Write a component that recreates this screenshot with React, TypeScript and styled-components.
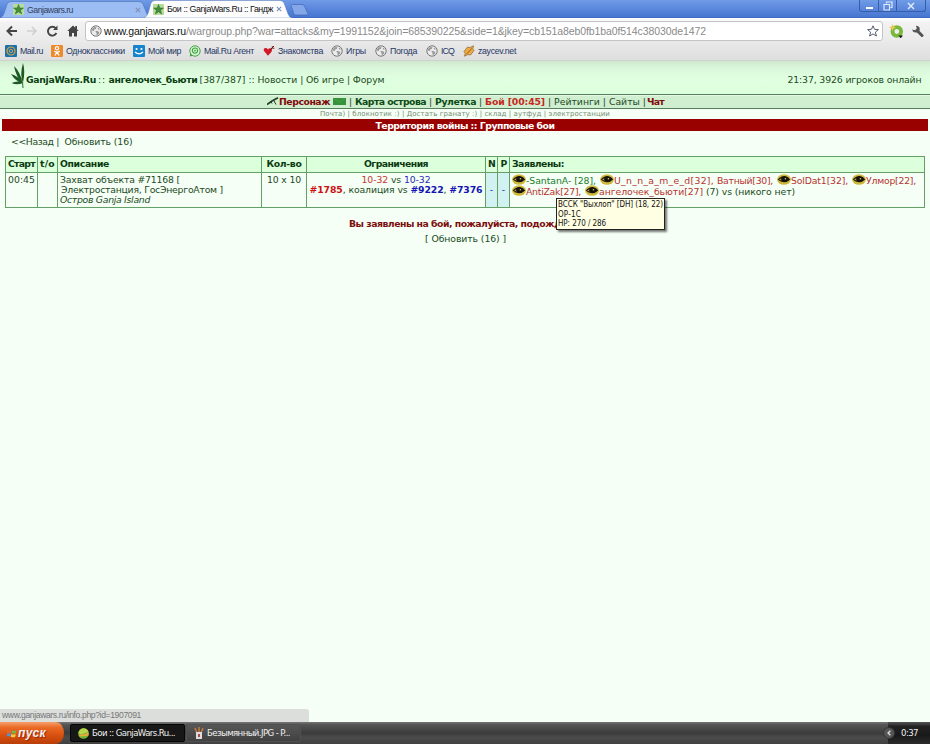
import React, { ReactNode, useLayoutEffect, useRef, useState } from 'react';
import styled, { createGlobalStyle, css } from 'styled-components';

const Global = createGlobalStyle`
  * { box-sizing: border-box; }
  body { margin: 0; background: #f5fff5; overflow: hidden; }
`;

const SANS = '"Liberation Sans", Arial, sans-serif';
const VERDANA = '"DejaVu Sans", Verdana, sans-serif';
const TAHOMA = '"DejaVu Sans Condensed", "DejaVu Sans", Tahoma, sans-serif';

/* ---------- text whose tracking adapts to a given width ---------- */

const Label = styled.span<{ $w: number; $ml?: number; $bold?: boolean; $color?: string; $italic?: boolean }>`
  display: block;
  flex: none;
  width: ${(p) => p.$w}px;
  margin-left: ${(p) => p.$ml ?? 0}px;
  white-space: nowrap;
  ${(p) => p.$bold && css`font-weight: bold;`}
  ${(p) => p.$italic && css`font-style: italic;`}
  ${(p) => p.$color && css`color: ${p.$color};`}
`;

type FitProps = { w: number; ml?: number; bold?: boolean; italic?: boolean; color?: string; children: ReactNode };

function Fit({ w, ml, bold, italic, color, children }: FitProps) {
  const inner = useRef<HTMLSpanElement>(null);
  const [spacing, setSpacing] = useState(0);
  useLayoutEffect(() => {
    const el = inner.current;
    if (!el) return;
    const count = (el.textContent ?? '').length || 1;
    setSpacing((w - el.getBoundingClientRect().width) / count);
  }, [w]);
  return (
    <Label $w={w} $ml={ml} $bold={bold} $italic={italic} $color={color}>
      <span ref={inner} style={{ letterSpacing: spacing }}>{children}</span>
    </Label>
  );
}

/* ---------- browser window ---------- */

const Window = styled.div`
  display: flex;
  flex-direction: column;
  width: 930px;
  height: 744px;
  overflow: hidden;
  font-family: ${VERDANA};
  font-size: 9.3px;
  color: #1c4a24;
`;

const TitleBar = styled.div`
  display: flex;
  align-items: flex-end;
  flex: none;
  height: 18px;
  background: linear-gradient(#6f9be6, #5a87dc 50%, #4877d1 92%, #3d66b8);
  font-family: ${SANS};
  font-size: 8.8px;
`;

const Tab = styled.div<{ $active?: boolean }>`
  position: relative;
  display: flex;
  align-items: center;
  width: 143px;
  height: ${(p) => (p.$active ? 18 : 17)}px;
  margin-left: ${(p) => (p.$active ? 1 : 4)}px;
  padding-left: ${(p) => (p.$active ? 5 : 9)}px;
  color: ${(p) => (p.$active ? '#111' : '#33425f')};
  z-index: ${(p) => (p.$active ? 1 : 0)};
`;

const TabShape = styled.svg`
  position: absolute;
  left: -4px;
  top: 0;
  z-index: -1;
`;

const Close = styled.svg<{ $ml: number }>`
  flex: none;
  margin-left: ${(p) => p.$ml}px;
`;

const NewTab = styled.svg`
  flex: none;
  margin: 0 auto 0 -1px;
`;

const WindowButtons = styled.div`
  display: flex;
  align-self: flex-start;
  width: 67px;
  height: 12px;
  margin-right: 4px;
  border: 1px solid #365da8;
  border-top: 0;
  border-radius: 0 0 3px 3px;
`;

const WindowButton = styled.div<{ $w: number }>`
  display: flex;
  align-items: center;
  justify-content: center;
  width: ${(p) => p.$w}px;
  & + & { border-left: 1px solid #365da8; }
`;

const Toolbar = styled.div`
  display: flex;
  align-items: center;
  flex: none;
  height: 24px;
  padding: 2px 0 0 6px;
  background: linear-gradient(#ffffff, #f2f2f2 20%, #eaeaea);
  > svg { flex: none; }
`;

const Nav = styled.div`
  display: flex;
  align-items: center;
  flex: none;
  width: 79px;
  gap: 8px;
`;

const AddressBar = styled.div`
  display: flex;
  align-items: center;
  flex: none;
  width: 798px;
  height: 20px;
  margin-right: 6px;
  padding-left: 4px;
  background: #fff;
  border: 1px solid #c4c4c4;
  border-radius: 3px;
  font: 10.5px ${SANS};
`;

const Star = styled.svg`
  margin-left: 161px;
`;

const Wrench = styled.svg`
  margin-left: 7px;
`;

const Bookmarks = styled.div`
  display: flex;
  align-items: center;
  flex: none;
  height: 19px;
  padding-left: 5px;
  background: linear-gradient(#e9e9e9, #dedede);
  border-bottom: 1px solid #cfd3cf;
  font: 8.8px ${SANS};
  color: #1f3764;
  svg { flex: none; }
`;

const Bookmark = styled.div<{ $ml?: number }>`
  display: flex;
  align-items: center;
  gap: 3px;
  margin-left: ${(p) => p.$ml ?? 0}px;
`;

/* ---------- page ---------- */

const Page = styled.main`
  flex: 1;
  display: flex;
  flex-direction: column;
  background: #f5fff5;
`;

const SiteHeader = styled.header`
  display: flex;
  align-items: center;
  height: 34px;
  padding: 4px 0 0 10px;
  background: linear-gradient(#cfe9cf, #dcf8dc 25%, #e0ffe0 60%, #dcffdc);
  border-bottom: 1px solid #55805a;
`;

const Leaf = styled.svg`
  flex: none;
  margin-top: -7px;
`;

const MainMenu = styled.nav`
  display: flex;
  align-items: center;
  height: 14px;
  padding: 0 0 2px 267px;
  background: #d0eed0;
  border-bottom: 1px solid #55805a;
  border-top: 1px solid #e4f8e4;
`;

const SubMenu = styled.nav`
  display: flex;
  align-items: center;
  height: 10px;
  padding: 0 0 1px 320px;
  font-size: 7px;
  color: #748a74;
`;

const Banner = styled.h1`
  display: flex;
  align-items: center;
  justify-content: center;
  height: 12px;
  margin: 0 2px;
  background: #990000;
  color: #fff;
  font-size: 9.3px;
`;

const BackRow = styled.div`
  display: flex;
  align-items: center;
  height: 21px;
  padding-left: 11px;
`;

const Battles = styled.section`
  display: grid;
  grid-template-columns: 32px 20px 204px 45px 179px 12px 12px 415px;
  grid-template-rows: 16px 35px;
  width: 920px;
  margin: 4px 0 0 5px;
  border: solid #62a065;
  border-width: 1px 1px 0 0;
`;

const Cell = styled.div<{ $head?: boolean; $center?: boolean; $tint?: boolean; $middle?: boolean }>`
  display: flex;
  flex-direction: column;
  min-width: 0;
  align-items: ${(p) => (p.$center ? 'center' : 'flex-start')};
  justify-content: ${(p) => (p.$head || p.$middle ? 'center' : 'flex-start')};
  padding: ${(p) => (p.$head || p.$middle ? '0' : '2px 0 0')} ${(p) => (p.$center ? 0 : 2)}px;
  line-height: 10px;
  border: solid #62a065;
  border-width: 0 0 1px 1px;
  ${(p) => p.$head && css`background: #dcffdc; font-weight: bold; color: #0c3a10; padding-bottom: 1px;`}
  ${(p) => p.$tint && css`background: #d2f1f1; color: #2626a5;`}
`;

const Players = styled.div`
  display: flex;
  align-items: center;
  height: 11px;
  gap: 4px;
`;

const Player = styled.div`
  display: flex;
  align-items: center;
  flex: none;
  color: #b73332;
`;

const Eye = styled.svg`
  flex: none;
  margin-top: -3px;
`;

const Notice = styled.div`
  position: relative;
  display: flex;
  height: 12px;
  margin-top: 10px;
  padding-left: 349px;
  line-height: 12px;
  color: #7c0e0e;
`;

const Tooltip = styled.div`
  position: absolute;
  left: 556px;
  top: -20px;
  width: 109px;
  height: 32px;
  padding: 1px 0 0 1px;
  background: #ffffe3;
  border: 1px solid #222;
  box-shadow: 2px 2px 2px #0008;
  font: 8px/9.6px ${TAHOMA};
  color: #111;
`;

const Refresh = styled.div`
  padding-left: 425px;
  margin-top: 3px;
  line-height: 12px;
`;

const StatusBubble = styled.div`
  width: 309px;
  height: 13px;
  margin-top: auto;
  padding-left: 2px;
  background: #dcdedc;
  border-radius: 0 3px 0 0;
  font: 8.6px/13px ${SANS};
  color: #777;
`;

/* ---------- task bar ---------- */

const TaskBar = styled.footer`
  display: flex;
  align-items: stretch;
  flex: none;
  height: 22px;
  background: linear-gradient(#777, #555 12%, #3c3c3c 50%, #4b4b4b 70%, #404040);
  color: #f0f0f0;
  font-size: 8.6px;
`;

const Start = styled.div`
  display: flex;
  align-items: center;
  width: 64px;
  margin-right: 6px;
  padding-left: 7px;
  gap: 1px;
  background: linear-gradient(#f3a06b, #ea6a25 25%, #d9500f 60%, #b83e08);
  border-radius: 0 8px 8px 0 / 0 11px 11px 0;
  font: italic bold 12px ${SANS};
  text-shadow: 1px 1px 1px #6008;
`;

const Task = styled.div<{ $active?: boolean }>`
  display: flex;
  align-items: center;
  gap: 3px;
  width: 115px;
  margin: 2px 0 2px ${(p) => (p.$active ? 0 : 1)}px;
  padding-left: 7px;
  border-radius: 2px;
  background: ${(p) => (p.$active ? '#171717' : 'linear-gradient(#565656, #414141)')};
  border: 1px solid ${(p) => (p.$active ? '#050505' : '#505050')};
`;

const Tray = styled.div`
  display: flex;
  align-items: center;
  gap: 6px;
  width: 42px;
  margin-left: auto;
  background: linear-gradient(#555, #222 20%, #191919 60%, #2b2b2b);
`;

const TrayArrow = styled.svg`
  flex: none;
  margin-left: -5px;
`;

/* ---------- icons ---------- */

const Favicon = () => (
  <svg width="11" height="11" viewBox="0 0 11 11">
    <rect width="11" height="11" fill="#b6dc9c" />
    <path d="M5.5 .5 6.8 4H10.5L7.6 6.3 8.7 10 5.5 7.8 2.3 10 3.4 6.3.5 4H4.2Z" fill="#438c38" stroke="#2e6929" strokeWidth=".5" />
  </svg>
);

const Cross = ({ ml }: { ml: number }) => (
  <Close $ml={ml} width="6" height="6" viewBox="0 0 6 6">
    <path d="m.8.8 4.4 4.4m0-4.4L.8 5.2" stroke="#7d90b4" strokeWidth="1.1" />
  </Close>
);

const Globe = () => (
  <svg width="12" height="12" viewBox="0 0 12 12">
    <circle cx="6" cy="6" r="5.2" fill="#ececec" stroke="#777" />
    <path d="M2 4 4 2 6.5 2.3 5.8 4 4.2 4.6 3.6 6.2 2 5.6ZM6 5.8 8.6 6.4 9.5 8 7.6 10 6.4 9.6 6.6 7.8 5.4 6.8ZM8 2.6 9.8 4 9 4.8 7.8 4Z" fill="#999" />
  </svg>
);

const MailRu = () => (
  <svg width="12" height="12" viewBox="0 0 12 12">
    <rect width="12" height="12" rx="1" fill="#1a72a9" />
    <circle cx="6" cy="6" r="4" fill="none" stroke="#d8a04b" strokeWidth="1.2" />
    <circle cx="6" cy="6" r="1.7" fill="none" stroke="#d8a04b" />
  </svg>
);

const Odnoklassniki = () => (
  <svg width="12" height="12" viewBox="0 0 12 12">
    <rect width="12" height="12" rx="1" fill="#ec8a2c" />
    <circle cx="6" cy="3.3" r="1.7" fill="none" stroke="#fff" strokeWidth="1.2" />
    <path d="M3.2 6.2q2.8 1.8 5.6 0M6 7.3 3.8 10.5M6 7.3l2.2 3.2" fill="none" stroke="#fff" strokeWidth="1.3" />
  </svg>
);

const MyWorld = () => (
  <svg width="12" height="12" viewBox="0 0 12 12">
    <rect width="12" height="12" rx="1" fill="#1683cd" />
    <circle cx="3.6" cy="4" r="1.1" fill="#fff" />
    <circle cx="8.4" cy="4" r="1.1" fill="#fff" />
    <path d="M2 7q4 3.8 8 0" fill="none" stroke="#fff" strokeWidth="1.3" />
  </svg>
);

const Agent = () => (
  <svg width="12" height="12" viewBox="0 0 12 12">
    <circle cx="6" cy="6" r="5.2" fill="#d9f2d2" stroke="#43a548" />
    <circle cx="6" cy="5.6" r="2.6" fill="none" stroke="#43a548" strokeWidth="1.1" />
    <circle cx="6" cy="5.6" r=".9" fill="#43a548" />
    <path d="M1.2 8.5.7 11.5 4 10.8Z" fill="#43a548" />
  </svg>
);

const Heart = () => (
  <svg width="12" height="12" viewBox="0 0 12 12">
    <path d="M5 10.8.8 5.8Q.3 3.3 2.5 3 4 3 5 4.4 6.2 2.8 8 3.4 9.8 4.3 8.4 7Z" fill="#d31726" />
    <path d="M7 5 11 1M9.3 1.2v2h2" fill="none" stroke="#7c1018" />
  </svg>
);

const Zaycev = () => (
  <svg width="12" height="12" viewBox="0 0 12 12">
    <path d="M1 6.500 4.500 2 7 2.500 10.500.8 9.800 3.800 11 5.500 7.500 10 5 9.500 1.500 11.200 2.200 8.200Z" fill="#efab40" stroke="#8a6230" strokeWidth=".7" />
    <path d="m3 9 6-6M4.500 8.500l4-4" stroke="#a36f2b" strokeWidth=".7" />
  </svg>
);

const EyeIcon = () => (
  <Eye width="14" height="11" viewBox="0 0 14 11">
    <ellipse cx="7" cy="5.500" rx="6.900" ry="5.200" fill="#cdb83c" />
    <path d="M.8 5.500Q4 1.600 8 2 11.500 2.500 13.200 5.500 10.500 8.200 7 8.200 3.500 8 .8 5.500Z" fill="#17130a" />
    <path d="M2 5.600 4.200 4.300Q4 5.800 4.600 6.800Z" fill="#b69d3b" />
    <circle cx="8.400" cy="4.700" r=".8" fill="#cfc48a" />
  </Eye>
);

const Flag = () => (
  <svg width="10" height="10" viewBox="0 0 9 9">
    <path d="M0 2q2-1 4 0L3.5 4.5q-2-1-3.7 0Z" fill="#e6662c" />
    <path d="M4.6 2.1q2 1 4 0L8 4.6q-2 1-4 0Z" fill="#74b843" />
    <path d="M0 5.2q2-1 3.500 0L3 7.800q-2-1-3.400 0Z" fill="#4f94e0" />
    <path d="M4 5.400q2 1 4 0L7.400 7.900q-2 1-4 0Z" fill="#f2ce41" />
  </svg>
);

const Red = styled.span`color: #c83534;`;
const Blue = styled.span`color: #2c2cb4;`;
const StrongRed = styled.b`color: #cc1111;`;
const StrongBlue = styled.b`color: #1414b4;`;

export default function App() {
  return (
    <Window>
      <Global />
      <TitleBar>
        <Tab>
          <TabShape width="151" height="17" viewBox="0 0 151 17">
            <path d="M0 17Q3 16 4.500 11L7 3Q8 .5 11 .5H139Q142 .5 143 3L147 13Q148 16 151 17Z" fill="#9bbdf3" stroke="#5378b9" strokeWidth=".7" />
          </TabShape>
          <Favicon />
          <Fit w={46} ml={3}>Ganjawars.ru</Fit>
          <Cross ml={62} />
        </Tab>
        <Tab $active>
          <TabShape width="151" height="18" viewBox="0 0 151 18">
            <path d="M0 18Q3 17 4.500 12L7 3Q8 .5 11 .5H136Q139 .5 140 3L144 14Q145 17 148 18Z" fill="#fdfdfe" stroke="#6181b9" strokeWidth=".5" />
          </TabShape>
          <Favicon />
          <Fit w={106} ml={3}>Бои :: GanjaWars.Ru :: Гандж</Fit>
          <Cross ml={3} />
        </Tab>
        <NewTab width="19" height="15" viewBox="0 0 19 15">
          <path d="M1 2.500Q1 1.500 2.500 1.500H12Q13.500 1.500 14.500 3L18 11Q18 12 17 12H6Q4.500 12 4 11Z" fill="#83a7e9" stroke="#4469b0" strokeWidth=".7" />
        </NewTab>
        <WindowButtons>
          <WindowButton $w={19}><svg width="9" height="8"><path d="M1 6h7" stroke="#fff" strokeWidth="2" /></svg></WindowButton>
          <WindowButton $w={18}><svg width="10" height="10"><path d="M3.500 2.500V1H9v5.500H7.500M1 3.500h5.500V9H1Z" fill="none" stroke="#dfe9fb" strokeWidth="1.200" /></svg></WindowButton>
          <WindowButton $w={30}><svg width="8" height="8"><path d="m1 1 6 6m0-6L1 7" stroke="#dfe9fb" strokeWidth="1.500" /></svg></WindowButton>
        </WindowButtons>
      </TitleBar>

      <Toolbar>
        <Nav>
          <svg width="12" height="12" viewBox="0 0 12 12"><path d="M11 6H2M6 1.500 1.500 6 6 10.500" fill="none" stroke="#444" strokeWidth="2" /></svg>
          <svg width="12" height="12" viewBox="0 0 12 12"><path d="M1 6h8M6 2l4 4-4 4" fill="none" stroke="#d0d0d0" strokeWidth="1.700" /></svg>
          <svg width="13" height="12" viewBox="0 0 13 12"><path d="M9.800 3.400A4.400 4.400 0 1 0 10.400 8" fill="none" stroke="#444" strokeWidth="1.900" /><path d="M7 5h4.500V.5Z" fill="#444" /></svg>
          <svg width="12" height="12" viewBox="0 0 12 12"><path d="M6 .5.3 6H2v5.500h3V8h2v3.500h3V6h1.700L10 4.300V1H8.300v1.700Z" fill="#444" /></svg>
        </Nav>
        <AddressBar>
          <Globe />
          <Fit w={82} ml={2} color="#111">www.ganjawars.ru</Fit>
          <Fit w={520} color="#8a8a8a">/wargroup.php?war=attacks&amp;my=1991152&amp;join=685390225&amp;side=1&amp;jkey=cb151a8eb0fb1ba0f514c38030de1472</Fit>
          <Star width="12" height="12" viewBox="0 0 12 12"><path d="m6 .8 1.500 3.500 3.900.3-3 2.500 1 3.900L6 8.900 2.600 11l1-3.900-3-2.500 3.900-.3Z" fill="#fff" stroke="#555e6e" /></Star>
        </AddressBar>
        <svg width="15" height="15" viewBox="0 0 15 15">
          <circle cx="7.800" cy="7.500" r="4.300" fill="none" stroke="#79b83a" strokeWidth="3.800" />
          <path d="m3.500 0 1 2.500 2.500 1-2.500 1-1 2.500-1-2.500L0 3.500l2.500-1Z" fill="#efc84b" />
          <path d="M9.500 11.500h4.500L11.700 14.300Z" fill="#111" />
        </svg>
        <Wrench width="13" height="13" viewBox="0 0 13 13">
          <path d="m6.500 6 4.500 4.500" stroke="#555" strokeWidth="3" strokeLinecap="round" />
          <path d="M5 .8Q8.800.8 8.800 4.500 8 8 4.500 7.500 1.500 7 1 4.500L4 5.200 5.800 3.500Z" fill="#555" />
        </Wrench>
      </Toolbar>

      <Bookmarks>
        <Bookmark><MailRu /><Fit w={23}>Mail.ru</Fit></Bookmark>
        <Bookmark $ml={8}><Odnoklassniki /><Fit w={59}>Одноклассники</Fit></Bookmark>
        <Bookmark $ml={8}><MyWorld /><Fit w={33}>Мой мир</Fit></Bookmark>
        <Bookmark $ml={8}><Agent /><Fit w={50}>Mail.Ru Агент</Fit></Bookmark>
        <Bookmark $ml={9}><Heart /><Fit w={45}>Знакомства</Fit></Bookmark>
        <Bookmark $ml={8}><Globe /><Fit w={20}>Игры</Fit></Bookmark>
        <Bookmark $ml={9}><Globe /><Fit w={27}>Погода</Fit></Bookmark>
        <Bookmark $ml={9}><Globe /><Fit w={13}>ICQ</Fit></Bookmark>
        <Bookmark $ml={9}><Zaycev /><Fit w={38}>zaycev.net</Fit></Bookmark>
      </Bookmarks>

      <Page>
        <SiteHeader>
          <Leaf width="16" height="26" viewBox="0 0 16 26">
            <path d="M13 0Q15.500 8 13 20 9.500 12 13 0ZM4 3Q10.500 9 12.500 20 6 14 4 3ZM1 11Q8 12.500 12.500 20 6 19 1 11ZM1.500 20Q8 17 13 20 7 22.500 1.500 20Z" fill="#1f5a26" />
            <path d="M12.500 19 13 25" stroke="#31683a" />
          </Leaf>
          <Fit w={70} bold color="#0a3d12">GanjaWars.Ru</Fit>
          <Fit w={8} ml={2}>::</Fit>
          <Fit w={89} ml={2.5} bold color="#0a3d12">ангелочек_бьюти</Fit>
          <Fit w={46} ml={2}>[387/387]</Fit>
          <Fit w={136} ml={3}>:: Новости | Об игре | Форум</Fit>
          <Fit w={134} ml={403}>21:37, 3926 игроков онлайн</Fit>
        </SiteHeader>

        <MainMenu>
          <svg width="12" height="9" viewBox="0 0 12 9"><path d="M0 7.500 5 4 11 .8" fill="none" stroke="#233a24" strokeWidth="1.600" /><path d="m6.500 3 2.500 4.500M4 4.500l1 2" fill="none" stroke="#233a24" /></svg>
          <Fit w={51} bold color="#800909">Персонаж</Fit>
          <svg width="18" height="8" viewBox="-3 0 18 8"><rect y="1" width="13" height="7" fill="#38923c" /><path d="m1 2 5 3 6-3" fill="none" stroke="#48a54b" strokeWidth=".7" /></svg>
          <Fit w={3} ml={1}>|</Fit>
          <Fit w={71} ml={3} bold color="#0a4a12">Карта острова</Fit>
          <Fit w={3} ml={3}>|</Fit>
          <Fit w={41} ml={3} bold color="#0a4a12">Рулетка</Fit>
          <Fit w={3} ml={3}>|</Fit>
          <Fit w={60} ml={3} bold color="#c62820">Бой [00:45]</Fit>
          <Fit w={98} ml={3}>| Рейтинги | Сайты |</Fit>
          <Fit w={17} ml={1} bold color="#800909">Чат</Fit>
        </MainMenu>

        <SubMenu>
          <Fit w={290}>Почта) | блокнотик :) | Достать гранату :) | склад | аутфуд | электростанции</Fit>
        </SubMenu>

        <Banner><Fit w={179}>Территория войны :: Групповые бои</Fit></Banner>

        <BackRow>
          <Fit w={48}>&lt;&lt;Назад |</Fit>
          <Fit w={68} ml={5.5}>Обновить (16)</Fit>
        </BackRow>

        <Battles>
          <Cell $head><Fit w={27}>Старт</Fit></Cell>
          <Cell $head><Fit w={15}>t/o</Fit></Cell>
          <Cell $head><Fit w={49}>Описание</Fit></Cell>
          <Cell $head $center><Fit w={35}>Кол-во</Fit></Cell>
          <Cell $head $center><Fit w={64}>Ограничения</Fit></Cell>
          <Cell $head $center><Fit w={7}>N</Fit></Cell>
          <Cell $head $center><Fit w={6}>P</Fit></Cell>
          <Cell $head><Fit w={52}>Заявлены:</Fit></Cell>

          <Cell><Fit w={27}>00:45</Fit></Cell>
          <Cell />
          <Cell>
            <Fit w={120}>Захват объекта #71168 [</Fit>
            <Fit w={162} ml={1}>Электростанция, ГосЭнергоАтом ]</Fit>
            <Fit w={90} italic>Остров Ganja Island</Fit>
          </Cell>
          <Cell $center><Fit w={34}>10 x 10</Fit></Cell>
          <Cell $center>
            <Fit w={69}><Red>10-32</Red> vs <Blue>10-32</Blue></Fit>
            <Fit w={173}><StrongRed>#1785</StrongRed>, коалиция vs <StrongBlue>#9222</StrongBlue>, <StrongBlue>#7376</StrongBlue></Fit>
          </Cell>
          <Cell $tint $middle $center><span>-</span></Cell>
          <Cell $tint $middle $center><span>-</span></Cell>
          <Cell>
            <Players>
              <Player><EyeIcon /><Fit w={70} color="#207c2b">-SantanA- [28],</Fit></Player>
              <Player><EyeIcon /><Fit w={100}>U_n_n_a_m_e_d[32],</Fit></Player>
              <Player><Fit w={56} ml={-1}>Ватный[30],</Fit></Player>
              <Player><EyeIcon /><Fit w={57}>SolDat1[32],</Fit></Player>
              <Player><EyeIcon /><Fit w={50}>Улмор[22],</Fit></Player>
            </Players>
            <Players>
              <Player><EyeIcon /><Fit w={55}>AntiZak[27],</Fit></Player>
              <Player><EyeIcon /><Fit w={104}>ангелочек_бьюти[27]</Fit></Player>
              <Fit w={89} ml={-1}>(7) vs (никого нет)</Fit>
            </Players>
          </Cell>
        </Battles>

        <Notice>
          <Fit w={212} bold>Вы заявлены на бой, пожалуйста, подожд</Fit>
          <Tooltip>
            <Fit w={105}>ВССК "Выхлоп" [DH] (18, 22)</Fit>
            <Fit w={23}>ОР-1С</Fit>
            <Fit w={48}>HP: 270 / 286</Fit>
          </Tooltip>
        </Notice>
        <Refresh><Fit w={81}>[ Обновить (16) ]</Fit></Refresh>

        <StatusBubble><Fit w={139}>www.ganjawars.ru/info.php?id=1907091</Fit></StatusBubble>
      </Page>

      <TaskBar>
        <Start><Flag /><Fit w={28}>пуск</Fit></Start>
        <Task $active>
          <svg width="11" height="11" viewBox="0 0 11 11"><circle cx="5.500" cy="5.500" r="5.300" fill="#69b535" /><path d="M.3 5Q2 .3 5.500 .2 9.500.5 10.500 4L3 6.500Z" fill="#b9d64a" /><path d="M.4 6.500Q5 7.500 10.700 4.500L10.500 7.500Q6 8.500 1.500 8.500Z" fill="#f0a83c" /></svg>
          <Fit w={83}>Бои :: GanjaWars.Ru...</Fit>
        </Task>
        <Task>
          <svg width="10" height="13" viewBox="0 0 10 13"><path d="M3 6 1 1M5 6V0M7 6l2-5" stroke="#c77b3b" strokeWidth="1.500" /><path d="M2 5h6v7H2Z" fill="#ddd" /><path d="M4 7h2v3H4Z" fill="#b34747" /></svg>
          <Fit w={83}>Безымянный.JPG - P...</Fit>
        </Task>
        <Tray>
          <TrayArrow width="12" height="12" viewBox="0 0 13 13"><circle cx="6.500" cy="6.500" r="6" fill="#555" stroke="#333" /><path d="M8 4 5.500 6.500 8 9" fill="none" stroke="#ddd" strokeWidth="1.500" /></TrayArrow>
          <Fit w={17}>0:37</Fit>
        </Tray>
      </TaskBar>
    </Window>
  );
}
